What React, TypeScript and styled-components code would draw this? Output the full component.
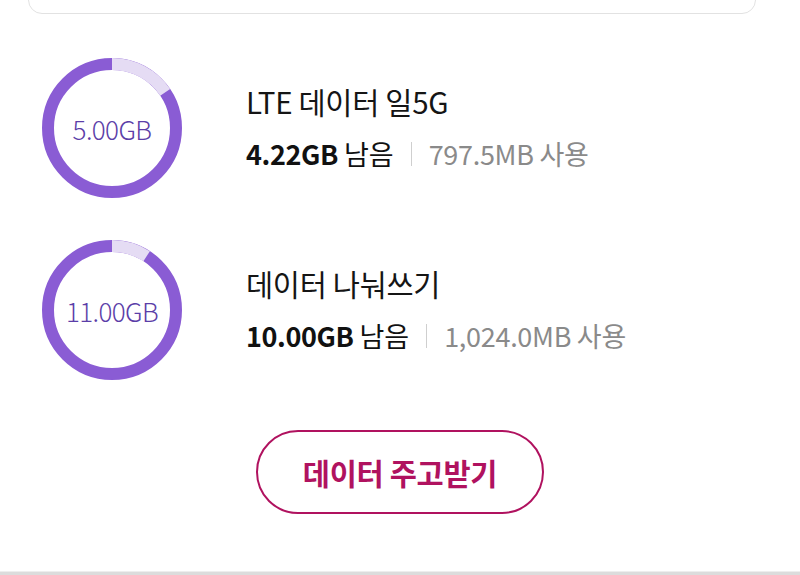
import React from 'react';
import styled, { createGlobalStyle } from 'styled-components';

const GlobalStyle = createGlobalStyle`
  html, body {
    margin: 0;
    padding: 0;
    background: #fff;
    font-family: "Noto Sans CJK KR", "Noto Sans", sans-serif;
  }
`;

const Page = styled.main`
  width: 800px;
  height: 575px;
  overflow: hidden;
  display: flex;
  flex-direction: column;
  background: #fff;
`;

const TopCard = styled.div`
  height: 40px;
  margin: -26px 44px 0 28px;
  border: 1.5px solid #e2e2e2;
  border-radius: 14px;
  box-sizing: border-box;
  flex-shrink: 0;
`;

const List = styled.section`
  display: flex;
  flex-direction: column;
  gap: 42px;
  padding: 44px 0 0 42px;
`;

const Row = styled.div`
  display: flex;
  align-items: center;
  gap: 64px;
`;

const RingBox = styled.div`
  position: relative;
  width: 140px;
  height: 140px;
  flex-shrink: 0;
  display: flex;
  align-items: center;
  justify-content: center;
`;

const RingSvg = styled.svg`
  position: absolute;
  inset: 0;
`;

const RingLabel = styled.span`
  position: relative;
  font-family: "Noto Sans CJK KR", "Noto Sans", sans-serif;
  font-size: 26px;
  font-weight: 300;
  color: #5b3ea8;
  letter-spacing: -0.6px;
`;

const Info = styled.div`
  display: flex;
  flex-direction: column;
  gap: 18px;
  padding-bottom: 5px;
`;

const Title = styled.div`
  font-size: 29.5px;
  line-height: 38px;
  color: #151515;
  letter-spacing: -0.3px;
`;

const Usage = styled.div`
  display: flex;
  align-items: center;
  font-size: 27px;
  line-height: 32px;
`;

const Remain = styled.span`
  color: #111;
  b {
    font-weight: 700;
    letter-spacing: -0.4px;
  }
`;

const Divider = styled.span`
  width: 1px;
  height: 24px;
  background: #cfcfcf;
  margin: 0 17px;
`;

const Used = styled.span`
  color: #8a8a8a;
  letter-spacing: -0.3px;
`;

const ButtonWrap = styled.div`
  display: flex;
  justify-content: center;
  padding: 50px 0 0 0;
`;

const ShareButton = styled.button`
  width: 288px;
  height: 84px;
  border: 2px solid #b0125f;
  border-radius: 42px;
  background: #fff;
  color: #b0125f;
  font-family: "Noto Sans CJK KR", "Noto Sans", sans-serif;
  font-size: 29.5px;
  font-weight: 700;
  letter-spacing: -0.3px;
  cursor: pointer;
`;

const Footer = styled.div`
  margin-top: auto;
  height: 3px;
  border-top: 1px solid #eeeeee;
  background: #dcdcdc;
`;

type RingProps = { total: string; usedRatio: number };

const Ring = ({ total, usedRatio }: RingProps) => {
  const r = 64;
  const c = 2 * Math.PI * r;
  const used = c * usedRatio;
  return (
    <RingBox>
      <RingSvg width="140" height="140" viewBox="0 0 140 140">
        <circle cx="70" cy="70" r={r} fill="none" stroke="#8a5cd4" strokeWidth="12" />
        <circle
          cx="70"
          cy="70"
          r={r}
          fill="none"
          stroke="#e5dcf4"
          strokeWidth="12"
          strokeDasharray={`${used} ${c}`}
          transform="rotate(-90 70 70)"
        />
      </RingSvg>
      <RingLabel>{total}</RingLabel>
    </RingBox>
  );
};

const plans = [
  { total: '5.00GB', title: 'LTE 데이터 일5G', remain: '4.22GB', used: '797.5MB', ratio: 797.5 / 5120 },
  { total: '11.00GB', title: '데이터 나눠쓰기', remain: '10.00GB', used: '1,024.0MB', ratio: 1024 / 11264 },
];

const App = () => {
  return (
    <Page>
      <GlobalStyle />
      <TopCard />
      <List>
        {plans.map((p) => (
          <Row key={p.title}>
            <Ring total={p.total} usedRatio={p.ratio} />
            <Info>
              <Title>{p.title}</Title>
              <Usage>
                <Remain>
                  <b>{p.remain}</b> 남음
                </Remain>
                <Divider />
                <Used>{p.used} 사용</Used>
              </Usage>
            </Info>
          </Row>
        ))}
      </List>
      <ButtonWrap>
        <ShareButton>데이터 주고받기</ShareButton>
      </ButtonWrap>
      <Footer />
    </Page>
  );
};

export default App;
